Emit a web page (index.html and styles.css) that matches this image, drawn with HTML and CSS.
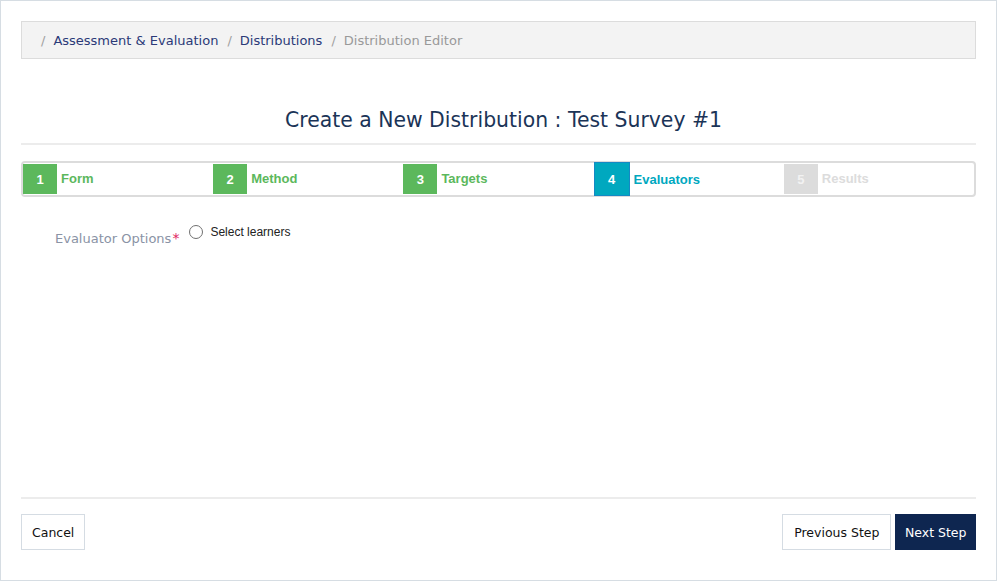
FILE: index.html
```html
<!DOCTYPE html>
<html>
<head>
<meta charset="utf-8">
<link rel="stylesheet" href="styles.css">
</head>
<body>
<div class="page">
  <nav class="breadcrumb">
    <span class="sep">/</span><a class="crumb">Assessment &amp; Evaluation</a>
    <span class="sep">/</span><a class="crumb">Distributions</a>
    <span class="sep">/</span><span class="crumb current">Distribution Editor</span>
  </nav>
  <main class="main">
    <h1 class="title">Create a New Distribution : Test Survey #1</h1>
    <div class="steps">
      <div class="step done"><span class="num">1</span><span class="label">Form</span></div>
      <div class="step done"><span class="num">2</span><span class="label">Method</span></div>
      <div class="step done"><span class="num">3</span><span class="label">Targets</span></div>
      <div class="step active"><span class="num">4</span><span class="label">Evaluators</span></div>
      <div class="step todo"><span class="num">5</span><span class="label">Results</span></div>
    </div>
    <div class="form-row">
      <div class="form-label">Evaluator Options<span class="req">*</span></div>
      <label class="radio"><span class="radio-dot"></span>Select learners</label>
    </div>
  </main>
  <footer class="footer">
    <button class="btn cancel">Cancel</button>
    <div class="right">
      <button class="btn">Previous Step</button>
      <button class="btn primary">Next Step</button>
    </div>
  </footer>
</div>
</body>
</html>
```
FILE: styles.css
```css
* { box-sizing: border-box; }
html, body { margin: 0; padding: 0; background: #fff; }
body { font-family: "DejaVu Sans", Verdana, sans-serif; }
.page {
  width: 997px;
  height: 581px;
  border: 1px solid #d6dde3;
  padding: 20px 20px 20px 20px;
  display: flex;
  flex-direction: column;
}
.breadcrumb {
  height: 38px;
  background: #f3f3f3;
  border: 1px solid #dcdcdc;
  display: flex;
  align-items: center;
  padding-left: 19px;
  padding-top: 1px;
  font-size: 13px;
}
.sep { color: #a0a0a0; margin-right: 8px; }
.crumb { color: #2b3a78; margin-right: 9px; }
.crumb.current { color: #999; }
.main { flex: 1; }
.title {
  margin: 47px 0 0 0;
  font-weight: normal;
  font-size: 20.4px;
  line-height: 28px;
  color: #1b3457;
  text-align: center;
  padding: 0 0 9px 10px;
  border-bottom: 2px solid #ececec;
}
.steps {
  margin-top: 16px;
  height: 36px;
  border: 2px solid #dcdcdc;
  border-radius: 4px;
  display: grid;
  grid-template-columns: repeat(5, 1fr);
  font-family: "Liberation Sans", Arial, sans-serif;
  font-weight: bold;
  font-size: 13px;
}
.step { display: flex; align-items: center; }
.num {
  width: 34px;
  height: 30px;
  display: flex;
  align-items: center;
  justify-content: center;
  color: #fff;
}
.label { margin-left: 4px; margin-top: -1px; }
.done .num { background: #5cb85c; }
.done .label { color: #5cb85c; }
.active .num {
  background: #00a8bf;
  border: 1px solid #1589c4;
  width: 36px;
  height: 34px;
  margin-top: -2px;
  margin-bottom: -2px;
}
.active .label { color: #00a8bf; margin-top: 1px; }
.todo .num { background: #dcdcdc; color: #f2f2f2; }
.todo .label { color: #dcdcdc; }
.form-row {
  display: flex;
  align-items: flex-start;
  margin-top: 27px;
  padding-left: 34px;
}
.form-label {
  font-size: 13px;
  color: #8a93a5;
  margin-top: 6px;
}
.req { color: #e0245e; font-size: 14px; margin-left: 1px; }
.radio {
  display: flex;
  align-items: center;
  margin-left: 10px;
  margin-top: 1px;
  font-family: "Liberation Sans", Arial, sans-serif;
  font-size: 12px;
  color: #222;
}
.radio-dot {
  width: 14px;
  height: 14px;
  border: 1px solid #707070;
  border-radius: 50%;
  margin-right: 7px;
  background: #fff;
}
.footer {
  height: 63px;
  border-top: 2px solid #ececec;
  display: flex;
  justify-content: space-between;
  align-items: flex-start;
  padding-top: 15px;
}
.right { display: flex; gap: 4px; }
.btn {
  height: 36px;
  padding: 0 11px;
  font-family: "DejaVu Sans", Verdana, sans-serif;
  font-size: 12.5px;
  color: #111;
  background: #fff;
  border: 1px solid #d5dce3;
  border-radius: 0;
}
.btn.cancel { padding: 0 10px; }
.btn.primary {
  background: #0e2650;
  border-color: #0e2650;
  color: #fff;
  padding: 0 8.5px;
}
```
